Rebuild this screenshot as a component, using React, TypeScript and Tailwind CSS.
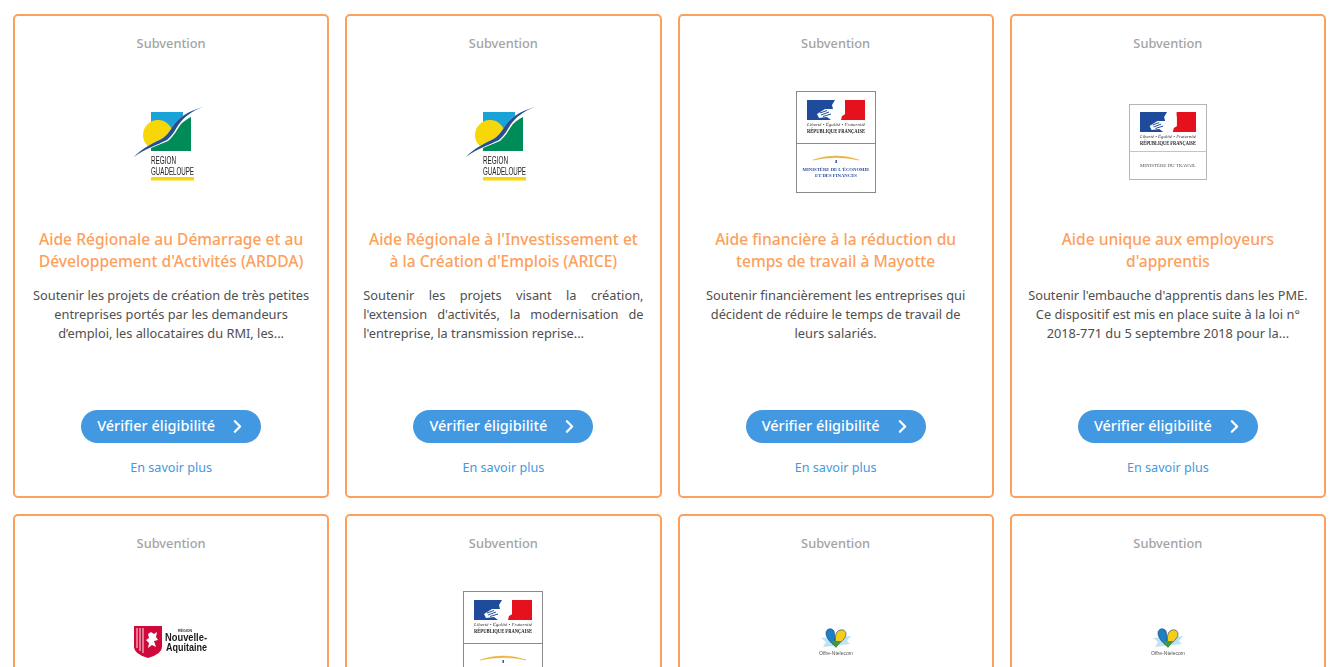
import { ChevronRight } from "lucide-react";

type Logo = "guadeloupe" | "economie" | "travail" | "aquitaine" | "offre";

function Marianne({ x, y, w, h }: { x: number; y: number; w: number; h: number }) {
  const sx = w / 58;
  const sy = h / 20;
  return (
    <g transform={`translate(${x} ${y}) scale(${sx} ${sy})`}>
      <rect x="0" y="0" width="28" height="20" fill="#1f4b9c" />
      <rect x="38" y="0" width="20" height="20" fill="#e5111d" />
      <rect x="28" y="0" width="10" height="20" fill="#fff" />
      <path d="M28 0 L25 5 L26 9 L18 9 L10 14 L12 18 L20 17 L24 20 L30 20 Z" fill="#fff" />
      <path d="M13 13 L20 10.5 M14 15 L22 12 M16 16.5 L24 14" stroke="#1f4b9c" strokeWidth="1" fill="none" />
      <path d="M38 0 L38 4 L39.5 8 L41 10 L38.5 11 L38.5 14 L35 16 L34 20 L40 20 L40 0 Z" fill="#e5111d" />
    </g>
  );
}

function FlagEconomie() {
  return (
    <svg width="80" height="102" viewBox="0 0 80 102" className="block overflow-visible blur-[0.3px]">
      <rect x="0.5" y="0.5" width="79" height="101" fill="#fff" stroke="#8a8a8a" />
      <line x1="0" y1="52.5" x2="80" y2="52.5" stroke="#8a8a8a" />
      <Marianne x={11} y={9} w={58} h={20} />
      <text x="40" y="35" textAnchor="middle" fontSize="4.6" fontStyle="italic" fill="#333" fontFamily="Liberation Serif, serif" textLength="58" lengthAdjust="spacingAndGlyphs">Liberté • Égalité • Fraternité</text>
      <text x="40" y="42" textAnchor="middle" fontSize="5.4" fontWeight="700" fill="#222" fontFamily="Liberation Serif, serif" textLength="58" lengthAdjust="spacingAndGlyphs">RÉPUBLIQUE FRANÇAISE</text>
      <path d="M17 69 Q40 61 63 69 Q40 64 17 69 Z" fill="#e8b23a" stroke="#e8b23a" strokeWidth="0.5" />
      <rect x="39.5" y="69" width="1.4" height="3" fill="#2c4f9e" />
      <text x="40" y="80" textAnchor="middle" fontSize="4.6" fontWeight="700" fill="#2c4f9e" fontFamily="Liberation Serif, serif" textLength="67" lengthAdjust="spacingAndGlyphs">MINISTÈRE DE L'ÉCONOMIE</text>
      <text x="40" y="86" textAnchor="middle" fontSize="4.6" fontWeight="700" fill="#2c4f9e" fontFamily="Liberation Serif, serif" textLength="42" lengthAdjust="spacingAndGlyphs">ET DES FINANCES</text>
    </svg>
  );
}

function FlagTravail() {
  return (
    <svg width="78" height="76" viewBox="0 0 78 76" className="block overflow-visible blur-[0.3px]">
      <rect x="0.5" y="0.5" width="77" height="75" fill="#fff" stroke="#b5b5b5" />
      <line x1="0" y1="47.5" x2="78" y2="47.5" stroke="#c4c4c4" />
      <Marianne x={11} y={8} w={56} h={20} />
      <text x="39" y="33.5" textAnchor="middle" fontSize="4.4" fontStyle="italic" fill="#333" fontFamily="Liberation Serif, serif" textLength="56" lengthAdjust="spacingAndGlyphs">Liberté • Égalité • Fraternité</text>
      <text x="39" y="41" textAnchor="middle" fontSize="5.4" fontWeight="700" fill="#222" fontFamily="Liberation Serif, serif" textLength="56" lengthAdjust="spacingAndGlyphs">RÉPUBLIQUE FRANÇAISE</text>
      <text x="39" y="63" textAnchor="middle" fontSize="4" fill="#555" fontFamily="Liberation Serif, serif" textLength="56" lengthAdjust="spacingAndGlyphs">MINISTÈRE DU TRAVAIL</text>
    </svg>
  );
}

function Guadeloupe() {
  return (
    <svg width="78" height="80" viewBox="0 0 78 80" className="block overflow-visible blur-[0.25px]">
      <rect x="19" y="10" width="32" height="24" fill="#1aa3d6" />
      <circle cx="26" cy="33" r="15" fill="#f7d708" />
      <path d="M2 55 C10 46 22 41 31 36 C38 31 40 24 44 20 C50 13 60 8 71 5 L71 8 L59 15 L59 50 L19 50 L19 47 L2 55 Z" fill="#fff" />
      <path d="M59 15 L59 49 L19 49 L19 46 L36 39 C43 33 45 27 49 22 C52 19 55 17 59 15 Z" fill="#008c58" />
      <path d="M2 55 C10 46 22 41 31 36 C38 31 40 24 44 20 C50 13 60 8 71 5 C60 9 52 15 47 22 C43 28 41 33 35 38 C25 43 12 47 2 55 Z" fill="#23508f" />
      <text x="19" y="62" fontSize="10.5" fill="#222" fontFamily="Liberation Sans, sans-serif" textLength="25" lengthAdjust="spacingAndGlyphs">REGION</text>
      <text x="19" y="73" fontSize="10.5" fill="#222" fontFamily="Liberation Sans, sans-serif" textLength="43" lengthAdjust="spacingAndGlyphs">GUADELOUPE</text>
      <rect x="19" y="75" width="43" height="3.5" fill="#f7d708" />
    </svg>
  );
}

function Aquitaine() {
  return (
    <svg width="74" height="34" viewBox="0 0 74 34" className="block overflow-visible blur-[0.2px]">
      <path d="M0 1 H28 V22 Q28 29 14 33 Q0 29 0 22 Z" fill="#cf0a3a" />
      <path d="M3 3 V23 M6 3 V26 M9 3 V28" stroke="#fff" strokeWidth="0.9" fill="none" />
      <path d="M14 9 L17 7 L20 9 L23 7 L22 12 L24 15 L20 16 L22 22 L18 20 L14 23 L15 18 L12 15 L15 13 Z" fill="#fff" />
      <text x="44" y="7" fontSize="3.6" fontWeight="700" fill="#333" fontFamily="Liberation Sans, sans-serif">RÉGION</text>
      <text x="31" y="15.5" fontSize="10" fontWeight="700" fill="#1a1a1a" fontFamily="Liberation Sans, sans-serif" textLength="42" lengthAdjust="spacingAndGlyphs">Nouvelle-</text>
      <text x="32" y="25.5" fontSize="10" fontWeight="700" fill="#1a1a1a" fontFamily="Liberation Sans, sans-serif" textLength="41" lengthAdjust="spacingAndGlyphs">Aquitaine</text>
    </svg>
  );
}

function Offre() {
  return (
    <svg width="36" height="28" viewBox="0 0 36 28" className="block overflow-visible blur-[0.3px]">
      <path d="M3 10 L33 8 L29 13 L32 16 L5 19 L8 14 Z" fill="#bfe3f2" />
      <path d="M18 19 C12 14 8 10 8 5 C8 1 13 -1 16 3 C17 7 17 13 18 19 Z" fill="#1d7fc4" stroke="#143a6b" strokeWidth="0.6" />
      <path d="M18 19 C22 14 28 11 28 6 C28 2 23 0 19 4 C17 7 17 13 18 19 Z" fill="#f4cf1a" stroke="#143a6b" strokeWidth="0.6" />
      <path d="M13 13 L23 13 L18 20 Z" fill="#3f9c3a" />
      <text x="18" y="26.5" textAnchor="middle" fontSize="5" fill="#555" fontFamily="Liberation Sans, sans-serif" textLength="34" lengthAdjust="spacingAndGlyphs">Offre-Ntelecom</text>
    </svg>
  );
}

const logos: Record<Logo, () => React.ReactElement> = {
  guadeloupe: Guadeloupe,
  economie: FlagEconomie,
  travail: FlagTravail,
  aquitaine: Aquitaine,
  offre: Offre,
};

type Card = {
  logo: Logo;
  title?: string[];
  desc?: string[];
  justify?: boolean;
};

const cards: Card[] = [
  {
    logo: "guadeloupe",
    title: ["Aide Régionale au Démarrage et au", "Développement d'Activités (ARDDA)"],
    desc: [
      "Soutenir les projets de création de très petites",
      "entreprises portés par les demandeurs",
      "d’emploi, les allocataires du RMI, les...",
    ],
  },
  {
    logo: "guadeloupe",
    title: ["Aide Régionale à l'Investissement et", "à la Création d'Emplois (ARICE)"],
    desc: [
      "Soutenir les projets visant la création,",
      "l'extension d'activités, la modernisation de",
      "l'entreprise, la transmission reprise...",
    ],
    justify: true,
  },
  {
    logo: "economie",
    title: ["Aide financière à la réduction du", "temps de travail à Mayotte"],
    desc: [
      "Soutenir financièrement les entreprises qui",
      "décident de réduire le temps de travail de",
      "leurs salariés.",
    ],
  },
  {
    logo: "travail",
    title: ["Aide unique aux employeurs", "d'apprentis"],
    desc: [
      "Soutenir l'embauche d'apprentis dans les PME.",
      "Ce dispositif est mis en place suite à la loi n°",
      "2018-771 du 5 septembre 2018 pour la...",
    ],
  },
  { logo: "aquitaine" },
  { logo: "economie" },
  { logo: "offre" },
  { logo: "offre" },
];

export default function App() {
  return (
    <div className="h-[667px] overflow-hidden bg-white pt-[14px] pl-[13px] pr-[10px] font-['Noto_Sans',sans-serif]">
      <div className="grid grid-cols-4 gap-4">
        {cards.map((c, i) => {
          const L = logos[c.logo];
          return (
            <div key={i} className="flex h-[484px] flex-col items-center rounded-[5px] border-2 border-[#fd9f5d] px-4 pt-[17px]">
              <div className="text-[12.8px] font-medium leading-[20px] text-[#a3a3a3]">Subvention</div>
              <div className="flex h-[178px] w-full shrink-0 items-center justify-center">
                <L />
              </div>
              {c.title && (
                <h2 className="mt-[-3px] text-center text-[15.6px] font-medium leading-[22px] text-[#fd9f5d]">
                  {c.title.map((t) => (
                    <span key={t} className="block whitespace-nowrap">{t}</span>
                  ))}
                </h2>
              )}
              {c.desc && (
                <p className="mt-[14px] w-full text-center text-[12.8px] leading-[19px] text-[#4f4f4f]">
                  {c.desc.map((t, n) =>
                    c.justify ? (
                      <span
                        key={t}
                        className={n < 2 ? "block text-justify [text-align-last:justify]" : "block text-left"}
                      >
                        {t}
                      </span>
                    ) : (
                      <span key={t} className="block whitespace-nowrap">{t}</span>
                    ),
                  )}
                </p>
              )}
              {c.title && (
                <div className="mt-auto flex flex-col items-center pb-[18px]">
                  <a className="flex h-[33px] w-[180px] items-center justify-between rounded-full bg-[#4299e1] pb-px pl-4 pr-[13px] text-[14.5px] font-medium text-white">
                    <span>Vérifier éligibilité</span>
                    <ChevronRight size={21} strokeWidth={2.6} />
                  </a>
                  <a className="mt-[15px] text-[12.6px] leading-[20px] text-[#4299e1]">En savoir plus</a>
                </div>
              )}
            </div>
          );
        })}
      </div>
    </div>
  );
}
